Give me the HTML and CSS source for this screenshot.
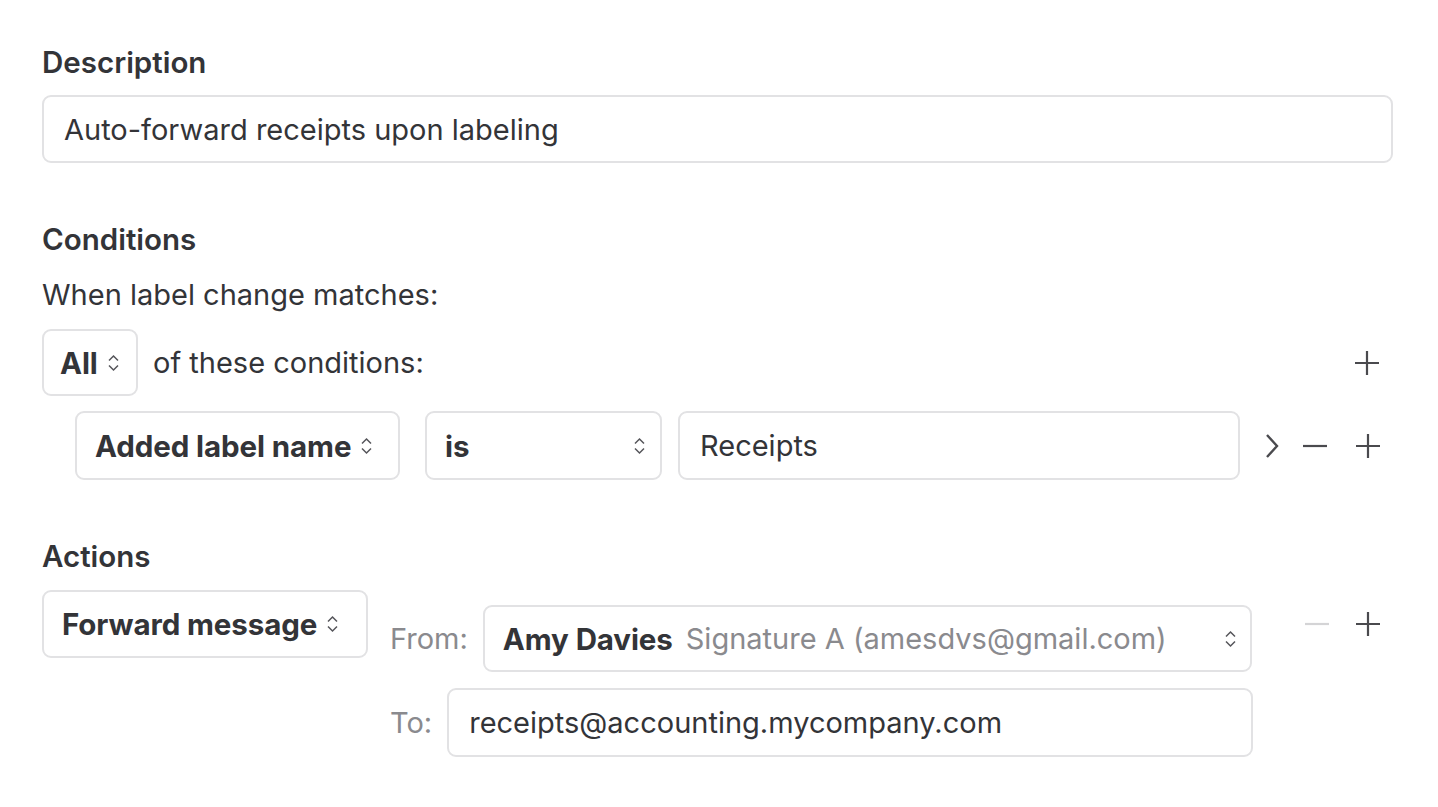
FILE: index.html
```html
<!DOCTYPE html>
<html lang="en">
<head>
<meta charset="utf-8">
<title>Rule</title>
<link rel="stylesheet" href="styles.css">
</head>
<body>
<div class="page">
  <section class="section section-desc">
    <div class="label">Description</div>
    <div class="field field-full">Auto-forward receipts upon labeling</div>
  </section>

  <section class="section section-cond">
    <div class="label">Conditions</div>
    <div class="text when">When label change matches:</div>
    <div class="row row-all">
      <div class="select select-all"><span class="bold">All</span><svg class="updown" viewBox="0 0 13 20"><path d="M2 7.5 L6.5 3 L11 7.5 M2 12.5 L6.5 17 L11 12.5"/></svg></div>
      <span class="text of">of these conditions:</span>
      <span class="spacer"></span>
      <svg class="icon plus" viewBox="0 0 26 26"><path d="M13 1 V25 M1 13 H25"/></svg>
    </div>
    <div class="row row-cond">
      <div class="select select-name"><span class="bold">Added label name</span><svg class="updown" viewBox="0 0 13 20"><path d="M2 7.5 L6.5 3 L11 7.5 M2 12.5 L6.5 17 L11 12.5"/></svg></div>
      <div class="select select-is"><span class="bold">is</span><svg class="updown" viewBox="0 0 13 20"><path d="M2 7.5 L6.5 3 L11 7.5 M2 12.5 L6.5 17 L11 12.5"/></svg></div>
      <div class="field field-value">Receipts</div>
      <div class="row-icons">
        <svg class="icon chev" viewBox="0 0 14 26"><path d="M2 2 L12 13 L2 24"/></svg>
        <svg class="icon minus" viewBox="0 0 26 26"><path d="M1 13 H25"/></svg>
        <svg class="icon plus" viewBox="0 0 26 26"><path d="M13 1 V25 M1 13 H25"/></svg>
      </div>
    </div>
  </section>

  <section class="section section-act">
    <div class="label">Actions</div>
    <div class="row row-act">
      <div class="select select-fwd"><span class="bold">Forward message</span><svg class="updown" viewBox="0 0 13 20"><path d="M2 7.5 L6.5 3 L11 7.5 M2 12.5 L6.5 17 L11 12.5"/></svg></div>
      <div class="params">
        <div class="param">
          <span class="plabel">From:</span>
          <div class="select select-from"><span class="bold">Amy Davies</span><span class="muted">Signature A (amesdvs@gmail.com)</span><span class="spacer"></span><svg class="updown" viewBox="0 0 13 20"><path d="M2 7.5 L6.5 3 L11 7.5 M2 12.5 L6.5 17 L11 12.5"/></svg></div>
        </div>
        <div class="param">
          <span class="plabel">To:</span>
          <div class="field field-to">receipts@accounting.mycompany.com</div>
        </div>
      </div>
      <div class="act-icons">
        <svg class="icon minus disabled" viewBox="0 0 26 26"><path d="M1 13 H25"/></svg>
        <svg class="icon plus" viewBox="0 0 26 26"><path d="M13 1 V25 M1 13 H25"/></svg>
      </div>
    </div>
  </section>
</div>
</body>
</html>
```

FILE: styles.css
```css
* { box-sizing: border-box; }
html, body { margin: 0; padding: 0; background: #ffffff; }
body {
  font-family: Inter, "Liberation Sans", sans-serif;
  font-size: 29px;
  color: #333438;
}
.page {
  width: 1438px;
  padding: 45px 45px 0 42px;
}
.label {
  font-weight: 600;
  font-size: 29.5px;
  line-height: 34px;
  color: #333438;
}
.text { line-height: 34px; }
.bold { font-weight: 700; font-size: 29.5px; letter-spacing: -0.1px; }
.muted { color: #8a8a8e; margin-left: 13px; }
.spacer { flex: 1; }

.field, .select {
  border: 2px solid #e2e2e4;
  border-radius: 9px;
  background: #fff;
  display: flex;
  align-items: center;
  white-space: nowrap;
}
.field { padding: 0 20px; }
.select { padding: 0 14px 0 18px; }

.section-desc .label { margin-bottom: 16px; }
.field-full { width: 1351px; height: 68px; }

.section-cond { margin-top: 59px; }
.when { margin-top: 22px; }
.row { display: flex; align-items: center; }
.row-all { margin-top: 17px; height: 67px; padding-right: 13px; }
.select-all { width: 96px; height: 67px; padding-left: 16px; }
.of { margin-left: 15px; }

.updown {
  width: 13px;
  height: 20px;
  fill: none;
  stroke: #55555a;
  stroke-width: 1.5;
  margin-left: 9px;
  flex: none;
}
.select-is .updown, .select-from .updown { margin-left: auto; }

.icon { fill: none; stroke: #4a4a4e; stroke-width: 2.2; flex: none; }
.plus { width: 26px; height: 26px; }
.minus { width: 26px; height: 26px; }
.chev { width: 14px; height: 26px; stroke-width: 2.4; }
.disabled { stroke: #d4d4d6; }

.row-cond { margin-top: 15px; margin-left: 33px; height: 69px; }
.select-name { width: 325px; height: 69px; }
.select-is { width: 237px; height: 69px; margin-left: 25px; }
.field-value { width: 562px; height: 69px; margin-left: 16px; }
.row-icons { display: flex; align-items: center; margin-left: 25px; gap: 23px; }
.row-icons .plus { margin-left: 4px; }

.section-act { margin-top: 59px; }
.row-act { align-items: flex-start; margin-top: 17px; }
.select-fwd { width: 326px; height: 68px; }
.params { margin-left: 22px; margin-top: 15px; display: flex; flex-direction: column; gap: 16px; }
.param { display: flex; align-items: center; }
.plabel { color: #8a8a8e; margin-right: 15px; }
.select-from { width: 769px; height: 67px; padding-right: 13px; }
.field-to { width: 806px; height: 69px; }
.act-icons { display: flex; align-items: center; gap: 25px; margin-left: 51px; height: 67px; }
```
